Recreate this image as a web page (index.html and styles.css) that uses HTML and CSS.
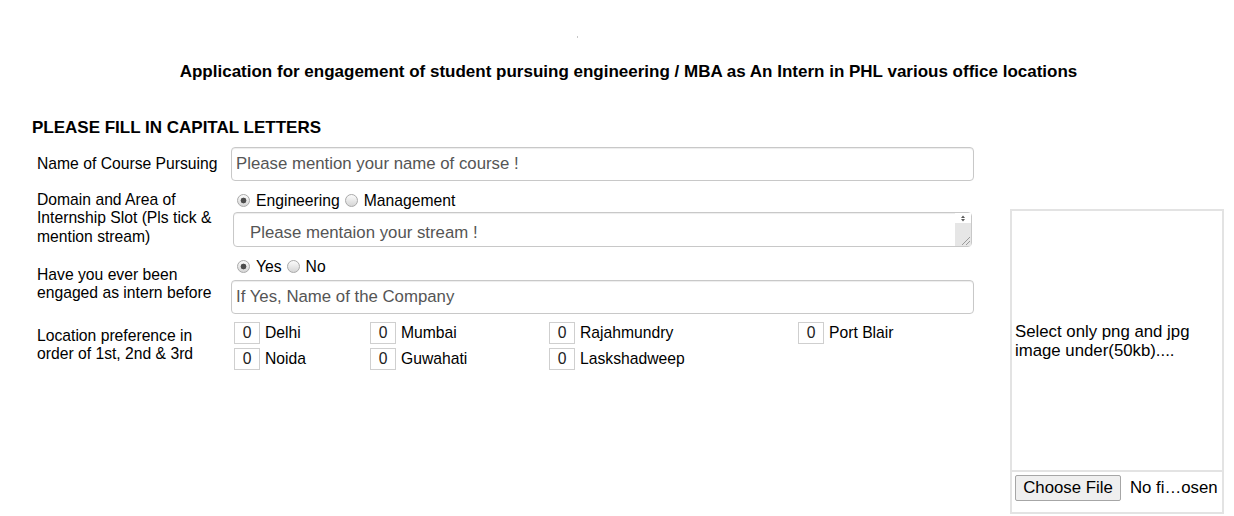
FILE: index.html
```html
<!DOCTYPE html>
<html>
<head>
<meta charset="utf-8">
<title>Internship Application</title>
<link rel="stylesheet" href="styles.css">
</head>
<body>
<div class="page">
  <div class="dot"></div>
  <h1 class="title">Application for engagement of student pursuing engineering / MBA as An Intern in PHL various office locations</h1>
  <div class="main">
    <form class="form">
      <h2 class="heading">PLEASE FILL IN CAPITAL LETTERS</h2>
      <div class="grid">
        <label class="lbl">Name of Course Pursuing</label>
        <div class="field">
          <input class="ctl" type="text" placeholder="Please mention your name of course !">
        </div>

        <label class="lbl">Domain and Area of<br>Internship Slot (Pls tick &amp;<br>mention stream)</label>
        <div class="field">
          <div class="radios">
            <label class="opt"><input type="radio" name="domain" checked>Engineering</label>
            <label class="opt"><input type="radio" name="domain">Management</label>
          </div>
          <div class="ta-wrap">
            <textarea class="ta" placeholder="Please mentaion your stream !"></textarea>
            <span class="sb"><svg width="16" height="33" viewBox="0 0 16 33"><rect x="0" y="0" width="16" height="10" fill="#fff"/><path d="M6 5 L8 2.5 L10 5 Z M6 6 L8 8.5 L10 6 Z" fill="#5a5a5a"/><rect x="0" y="10" width="16" height="23" fill="#e6e6e6"/><path d="M7 32 L15 24 M11 32 L15 28" stroke="#9a9a9a" stroke-width="1"/></svg></span>
          </div>
        </div>

        <label class="lbl lbl-up1">Have you ever been<br>engaged as intern before</label>
        <div class="field">
          <div class="radios">
            <label class="opt"><input type="radio" name="prev" checked>Yes</label>
            <label class="opt"><input type="radio" name="prev">No</label>
          </div>
          <input class="ctl ctl-gap" type="text" placeholder="If Yes, Name of the Company">
        </div>

        <label class="lbl lbl-up">Location preference in<br>order of 1st, 2nd &amp; 3rd</label>
        <div class="field">
          <div class="locs">
            <div class="loc"><input class="num" type="text" value="0"><span>Delhi</span></div>
            <div class="loc"><input class="num" type="text" value="0"><span>Mumbai</span></div>
            <div class="loc"><input class="num" type="text" value="0"><span>Rajahmundry</span></div>
            <div class="loc"><input class="num" type="text" value="0"><span>Port Blair</span></div>
            <div class="loc"><input class="num" type="text" value="0"><span>Noida</span></div>
            <div class="loc"><input class="num" type="text" value="0"><span>Guwahati</span></div>
            <div class="loc"><input class="num" type="text" value="0"><span>Laskshadweep</span></div>
          </div>
        </div>
      </div>
    </form>
    <div class="photo">
      <div class="photo-area">Select only png and jpg<br>image under(50kb)....</div>
      <div class="file-row"><button class="btn" type="button">Choose File</button><span class="fname">No fi…osen</span></div>
    </div>
  </div>
</div>
</body>
</html>
```

FILE: styles.css
```css
* { box-sizing: border-box; }

body {
  margin: 0;
  background: #fff;
  color: #000;
  font-family: "Liberation Sans", Arial, sans-serif;
}

.page {
  width: 1234px;
  height: 516px;
  overflow: hidden;
}

.dot {
  width: 1px;
  height: 2px;
  margin: 36px 0 0 577px;
  background: #c8c8c8;
}

.title {
  margin: 24px 0 0;
  padding-left: 23px;
  text-align: center;
  font-size: 17px;
  line-height: 19px;
  font-weight: bold;
}

.main {
  display: flex;
  align-items: flex-start;
}

.form {
  margin: 37px 0 0 32px;
  width: 942px;
}

.heading {
  margin: 0;
  font-size: 17px;
  line-height: 19px;
  font-weight: bold;
}

.grid {
  display: grid;
  grid-template-columns: 199px 743px;
  row-gap: 9px;
  margin-top: 10px;
  align-items: center;
  font-size: 15.7px;
}

.lbl {
  padding-left: 5px;
  line-height: 18.5px;
  white-space: nowrap;
}

.lbl-up { margin-top: -3px; }
.lbl-up1 { margin-top: -2px; }

.ctl {
  display: block;
  width: 743px;
  height: 34px;
  margin: 0;
  border: 1px solid #c8c8c8;
  border-radius: 4px;
  padding: 0 4px;
  font: inherit;
  font-size: 16.8px;
  color: #555;
  box-shadow: inset 0 1px 1px rgba(0, 0, 0, 0.075);
}

.ctl::placeholder,
.ta::placeholder {
  color: #555;
  opacity: 1;
}

.ctl-gap { margin-top: 3px; }

.radios {
  display: flex;
  align-items: center;
  height: 21px;
  padding-left: 6px;
}

.opt {
  display: flex;
  align-items: center;
}

.opt + .opt { margin-left: 5px; }

.opt input {
  appearance: none;
  -webkit-appearance: none;
  width: 13px;
  height: 13px;
  margin: 0 6px 0 0;
  border: 1px solid #a9a9a9;
  border-radius: 50%;
  background: linear-gradient(#fbfbfb, #d6d6d6);
}

.opt input:checked {
  background: radial-gradient(circle, #4d4d4d 0 2.6px, transparent 3.2px), linear-gradient(#fbfbfb, #d6d6d6);
}

.ta-wrap {
  position: relative;
  margin: 1px 2px 0;
  height: 35px;
}

.ta {
  display: block;
  width: 100%;
  height: 35px;
  margin: 0;
  border: 1px solid #c8c8c8;
  border-radius: 4px;
  padding: 10px 20px 0 16px;
  font: inherit;
  font-size: 16.8px;
  line-height: 20px;
  color: #555;
  resize: none;
  overflow: hidden;
  box-shadow: inset 0 1px 1px rgba(0, 0, 0, 0.075);
}

.sb {
  position: absolute;
  top: 1px;
  right: 1px;
  width: 16px;
  height: 33px;
}

.sb svg { display: block; }

.locs {
  display: grid;
  grid-template-columns: 136px 179px 249px auto;
  row-gap: 4px;
  padding-left: 3px;
  margin-top: -1px;
}

.loc {
  display: flex;
  align-items: center;
}

.num {
  width: 26px;
  height: 22px;
  margin: 0;
  padding: 0;
  border: 1px solid #cfcfcf;
  text-align: center;
  font: inherit;
  color: #222;
}

.loc span { margin-left: 5px; }

.photo {
  margin: 128px 0 0 36px;
  width: 214px;
  border: 2px solid #e3e3e3;
}

.photo-area {
  height: 261px;
  display: flex;
  align-items: center;
  padding: 0 0 0 3px;
  border-bottom: 2px solid #e3e3e3;
  font-size: 16.8px;
  line-height: 19px;
}

.file-row {
  display: flex;
  align-items: center;
  padding: 3px 3px 11px;
  font-size: 16.8px;
  white-space: nowrap;
}

.btn {
  width: 106px;
  height: 26px;
  padding: 0;
  border: 1px solid #a6a6a6;
  border-radius: 2px;
  background: #efefef;
  font: inherit;
  color: #000;
}

.fname { margin-left: 9px; }
```
